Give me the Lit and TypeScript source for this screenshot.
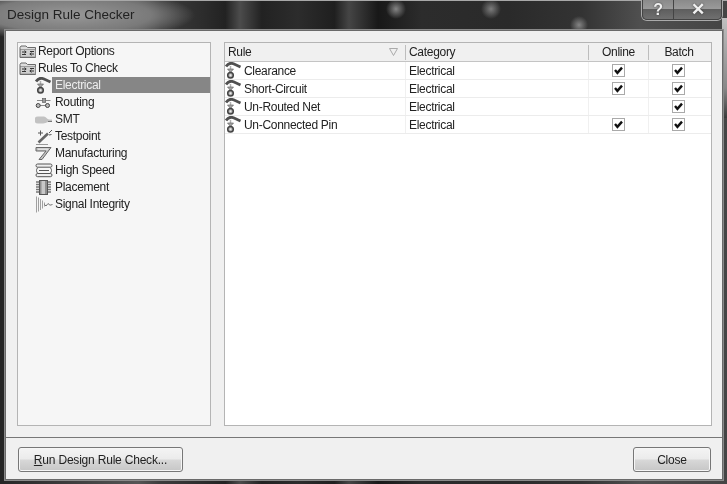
import { LitElement, html, css, svg } from "lit";
import { customElement } from "lit/decorators.js";

const folder = svg`<svg class="ic" width="18" height="15" viewBox="0 0 18 15"><path d="M1 3.5 L2 2 H7 L8.5 3.5 H16.5 V13.5 H1 Z" fill="#dcdcdc" stroke="#6a6a6a"/><rect x="1.5" y="5.5" width="15" height="7.5" fill="#cfcfcf" stroke="#777" stroke-width=".6"/><path d="M3 8 H7 M5.5 6.6 L7.2 8 L5.5 9.4 M15 10 H11 M12.5 8.6 L10.8 10 L12.5 11.4 M3 10.5 H7 M15 7.5 H11" stroke="#333" fill="none" stroke-width="1"/></svg>`;

const elec = svg`<svg class="ic" width="17" height="17" viewBox="0 0 17 17"><path d="M1 4.5 C3 1.5 6 0.8 8.5 1.8 L15.5 5" fill="none" stroke="#505050" stroke-width="2.8"/><path d="M5.5 4.5 V8" stroke="#666" stroke-width="1.5" stroke-dasharray="1 1"/><path d="M2.5 7 L8.5 7 L5.5 10.5 Z" fill="#a5a5a5" stroke="#555" stroke-width=".6"/><circle cx="5.5" cy="13.2" r="2.8" fill="#aaa" stroke="#444" stroke-width="1.5"/><circle cx="5.5" cy="13.2" r="1" fill="#eee"/></svg>`;

const routing = svg`<svg class="ic" width="17" height="13" viewBox="0 0 17 13"><path d="M3 9.5 H14 M2 4.5 H15.5" stroke="#888" fill="none"/><circle cx="3.2" cy="9.5" r="2" fill="#bbb" stroke="#444"/><circle cx="12.5" cy="9.5" r="2" fill="#bbb" stroke="#444"/><rect x="7.5" y="2.5" width="3.2" height="4" fill="#999" stroke="#555" stroke-width=".6"/></svg>`;

const smt = svg`<svg class="ic" width="18" height="10" viewBox="0 0 18 10"><path d="M3 1.5 H9 C11 1.5 12 4.5 14 4.5 H17 V7 H13 C11 7.5 10 8.5 8 8.5 H3 A3.5 3.5 0 0 1 3 1.5 Z" fill="#c2c2c2"/><path d="M13 6.5 H17" stroke="#777"/></svg>`;

const tp = svg`<svg class="ic" width="18" height="17" viewBox="0 0 18 17"><path d="M3.5 14.5 L13 5.5" stroke="#666" stroke-width="2.6"/><path d="M1 16.5 H13" stroke="#999"/><path d="M14 5 L17 2 M3 5 H8 M5.5 2.5 V7.5 M14 7 L16.5 6.5" stroke="#555" fill="none"/></svg>`;

const mfg = svg`<svg class="ic" width="17" height="15" viewBox="0 0 17 15"><path d="M1 1.5 H16 L7 13.5 H4 L11 5 H1 Z" fill="#c4c4c4" stroke="#666"/><path d="M3 3.2 H13" stroke="#eee"/></svg>`;

const hs = svg`<svg class="ic" width="18" height="15" viewBox="0 0 18 15"><rect x="1" y="1" width="16" height="3.2" rx="1.6" fill="#eee" stroke="#555"/><rect x="1" y="10.5" width="16" height="3.2" rx="1.6" fill="#eee" stroke="#555"/><path d="M3 4.5 C1 6 1 9 3 10.5 M15 4.5 C17 6 17 9 15 10.5 M4 7.5 H14" stroke="#555" fill="none"/></svg>`;

const place = svg`<svg class="ic" width="17" height="15" viewBox="0 0 17 15"><rect x="4.5" y="0.5" width="8" height="14" fill="#8f8f8f" stroke="#555"/><rect x="6.5" y="1" width="3.5" height="13" fill="#c8c8c8"/><path d="M1 2 H4 M1 4.5 H4 M1 7 H4 M1 9.5 H4 M1 12 H4 M13 2 H16 M13 4.5 H16 M13 7 H16 M13 9.5 H16 M13 12 H16" stroke="#777" stroke-width="1.3"/></svg>`;

const sig = svg`<svg class="ic" width="18" height="17" viewBox="0 0 18 17"><path d="M1.5 0.5 V16.5 M3.5 1.5 V15.5 M5.5 3 V14 M7.5 4.5 V12.5 M9.5 6.5 V10.5" stroke="#8a8a8a" stroke-width=".8"/><path d="M9.5 8.5 L11 10 L13 7.5 L15 9.2 L17.5 8.5" stroke="#666" fill="none" stroke-width=".9"/></svg>`;

const tree = [
  { label: "Report Options", icon: folder, top: true },
  { label: "Rules To Check", icon: folder, top: true },
  { label: "Electrical", icon: elec, sel: true },
  { label: "Routing", icon: routing },
  { label: "SMT", icon: smt },
  { label: "Testpoint", icon: tp },
  { label: "Manufacturing", icon: mfg },
  { label: "High Speed", icon: hs },
  { label: "Placement", icon: place },
  { label: "Signal Integrity", icon: sig },
];

const rules = [
  { name: "Clearance", online: true, batch: true },
  { name: "Short-Circuit", online: true, batch: true },
  { name: "Un-Routed Net", online: false, batch: true },
  { name: "Un-Connected Pin", online: true, batch: true },
];

const checkbox = svg`<svg width="13" height="13" viewBox="0 0 13 13"><rect x=".5" y=".5" width="12" height="12" fill="#fff" stroke="#a9a9a9"/><path d="M3 6 L5.4 8.8 L10 3.6" fill="none" stroke="#111" stroke-width="2.4"/></svg>`;

@customElement("app-root")
export class AppRoot extends LitElement {
  static styles = css`
    :host {
      display: block;
      width: 727px;
      height: 484px;
      overflow: hidden;
      background: #333;
      font-family: "Liberation Sans", Arial, sans-serif;
      font-size: 12px;
      letter-spacing: -0.3px;
      color: #222;
    }
    .window {
      width: 727px;
      height: 484px;
      box-sizing: border-box;
      display: flex;
      flex-direction: column;
      padding: 0 4px 4px 5px;
      filter: blur(0.3px);
      background:
        linear-gradient(#a8a8a8, #a8a8a8) no-repeat 0 0 / 100% 1px,
        linear-gradient(#c0c0c0, #888 70%, #3a3a3a) no-repeat 722px 18px / 5px 100px,
        radial-gradient(circle 10px at 396px 9px, #858585 0, transparent 100%) no-repeat,
        radial-gradient(circle 10px at 491px 9px, #7c7c7c 0, transparent 100%) no-repeat,
        radial-gradient(circle 9px at 579px 25px, #858585 0, transparent 100%) no-repeat,
        radial-gradient(ellipse 125px 26px at 70px 15px, #989898 0, #7a7a7a 65%, transparent 100%) no-repeat,
        linear-gradient(90deg, #252525 0, #555 19%, #3c3c3c 22%, #2c2c2c 28%, #222 31%, #4c4c4c 33%, #222 36%, #2c2c2c 41%, #1f1f1f 46%, #454545 48%, #181818 52%, #2c2c2c 58%, #2a2a2a 70%, #333 80%, #4f4f4f 88%, #444 100%);
    }
    .title {
      height: 30px;
      flex: none;
      display: flex;
      align-items: flex-start;
      justify-content: space-between;
    }
    .caption {
      margin: 6px 0 0 2px;
      font-size: 13.5px;
      letter-spacing: 0;
      line-height: 18px;
      color: #222;
    }
    .controls {
      display: flex;
      width: 80px;
      height: 20px;
      box-sizing: border-box;
      margin-right: 1px;
      border: 1px solid #444;
      border-top: none;
      border-radius: 0 0 5px 5px;
      background: linear-gradient(#8a8a8a, #9a9a9a 45%, #5e5e5e 50%, #707070);
      box-shadow: 0 0 0 1px #aaa;
    }
    .ctl {
      display: flex;
      align-items: center;
      justify-content: center;
      font-weight: bold;
      color: #f0f0f0;
      text-shadow: 0 0 2px #333;
      font-size: 16px;
    }
    .ctl.help { width: 30px; border-right: 1px solid #444; }
    .ctl.close { flex: 1; font-size: 17px; }
    .client {
      flex: 1;
      display: flex;
      flex-direction: column;
      min-height: 0;
      background: #f0f0f0;
      border: 1px solid #6a6a6a;
      box-shadow: 0 0 0 1px #8a8a8a;
    }
    .panes {
      flex: 1;
      min-height: 0;
      display: flex;
      gap: 13px;
      padding: 11px 10px 11px 11px;
    }
    .tree {
      width: 194px;
      box-sizing: border-box;
      border: 1px solid #b4b4b4;
      background: #f6f6f6;
      padding: 0 0 0 1px;
    }
    .node {
      display: flex;
      align-items: center;
      height: 17px;
      padding-left: 16px;
    }
    .node.top { padding-left: 0; }
    .icslot {
      width: 18px;
      flex: none;
      display: flex;
      align-items: center;
      justify-content: flex-start;
    }
    .ic { display: block; flex: none; }
    .lbl { padding: 0 3px 0 2px; line-height: 15px; flex: none; }
    .node.top .lbl { padding-left: 1px; }
    .node.sel .lbl {
      flex: 1;
      align-self: flex-start;
      background: #868686;
      color: #eee;
      margin-left: -1px;
      padding-left: 3px;
      height: 16px;
      line-height: 16px;
    }
    .table {
      flex: 1;
      box-sizing: border-box;
      border: 1px solid #b4b4b4;
      background: #fff;
      display: flex;
      flex-direction: column;
    }
    .row {
      display: grid;
      grid-template-columns: 181px 183px 60px 60px;
      align-items: center;
    }
    .head {
      height: 18px;
      background: #f0f0f0;
      border-bottom: 1px solid #c4c4c4;
    }
    .head > div {
      height: 15px;
      line-height: 15px;
      display: flex;
      align-items: center;
      justify-content: space-between;
      padding: 0 7px 0 3px;
      border-right: 1px solid #bdbdbd;
      box-sizing: border-box;
    }
    .head > div:last-child { border-right: none; }
    .head .mid { justify-content: center; padding: 0; }
    .body {
      height: 18px;
      box-sizing: border-box;
      border-bottom: 1px solid #ececec;
    }
    .cell {
      height: 17px;
      display: flex;
      align-items: center;
      border-right: 1px solid #f0f0f0;
      box-sizing: border-box;
    }
    .cell.name { gap: 1px; }
    .cell.cat { padding-left: 3px; }
    .cell.chk { justify-content: center; }
    .cell:last-child { border-right: none; padding-right: 2px; }
    .foot {
      flex: none;
      height: 42px;
      box-sizing: border-box;
      border-top: 1px solid #777;
      display: flex;
      align-items: flex-start;
      justify-content: space-between;
      padding: 9px 11px 0 12px;
    }
    button {
      font: inherit;
      letter-spacing: -0.2px;
      color: #222;
      height: 25px;
      border: 1px solid #777;
      border-radius: 3px;
      background: linear-gradient(#f4f4f4, #ebebeb 48%, #d8d8d8 52%, #c6c6c6);
      box-shadow: inset 0 0 0 1px #f6f6f6;
      padding: 0;
    }
    .run { width: 165px; }
    .close-btn { width: 78px; }
    u { text-underline-offset: 1px; }
  `;

  render() {
    return html`<div class="window">
      <div class="title">
        <div class="caption">Design Rule Checker</div>
        <div class="controls">
          <div class="ctl help">?</div>
          <div class="ctl close">✕</div>
        </div>
      </div>
      <div class="client">
        <div class="panes">
          <div class="tree">
            ${tree.map(
              (n) => html`<div class="node ${n.top ? "top" : ""} ${n.sel ? "sel" : ""}">
                <span class="icslot">${n.icon}</span><span class="lbl">${n.label}</span>
              </div>`
            )}
          </div>
          <div class="table">
            <div class="row head">
              <div>Rule
                <svg width="9" height="8" viewBox="0 0 9 8"><path d="M.5 .5 H8.5 L4.5 7.5 Z" fill="none" stroke="#aaa"/></svg>
              </div>
              <div>Category</div>
              <div class="mid">Online</div>
              <div class="mid">Batch</div>
            </div>
            ${rules.map(
              (r) => html`<div class="row body">
                <div class="cell name"><span class="icslot">${elec}</span>${r.name}</div>
                <div class="cell cat">Electrical</div>
                <div class="cell chk">${r.online ? checkbox : ""}</div>
                <div class="cell chk">${r.batch ? checkbox : ""}</div>
              </div>`
            )}
          </div>
        </div>
        <div class="foot">
          <button class="run"><u>R</u>un Design Rule Check...</button>
          <button class="close-btn">Close</button>
        </div>
      </div>
    </div>`;
  }
}
